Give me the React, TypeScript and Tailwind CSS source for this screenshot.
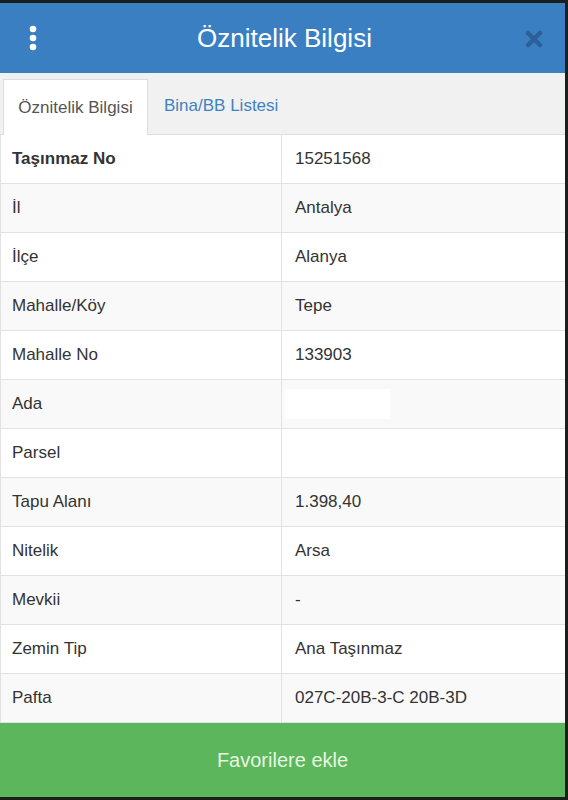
const rows: [string, string][] = [
  ['Taşınmaz No', '15251568'],
  ['İl', 'Antalya'],
  ['İlçe', 'Alanya'],
  ['Mahalle/Köy', 'Tepe'],
  ['Mahalle No', '133903'],
  ['Ada', ''],
  ['Parsel', ''],
  ['Tapu Alanı', '1.398,40'],
  ['Nitelik', 'Arsa'],
  ['Mevkii', '-'],
  ['Zemin Tip', 'Ana Taşınmaz'],
  ['Pafta', '027C-20B-3-C 20B-3D'],
];

export default function App() {
  return (
    <div
      className="w-[568px] h-[800px] bg-[#1b1f1b] pt-[3px] pr-[3px] pb-[3px] flex flex-col overflow-hidden"
      style={{ fontFamily: '"Liberation Sans", Arial, sans-serif' }}
    >
      {/* Header */}
      <div className="h-[70px] shrink-0 bg-[#3a7fc2] flex items-center justify-between px-[26px]">
        <svg width="14" height="26" viewBox="0 0 14 26">
          <circle cx="7" cy="4" r="3.3" fill="#fff" />
          <circle cx="7" cy="13" r="3.3" fill="#fff" />
          <circle cx="7" cy="22" r="3.3" fill="#fff" />
        </svg>
        <h1 className="text-white text-[26px] leading-none pl-[4px]">Öznitelik Bilgisi</h1>
        <svg width="18" height="18" viewBox="0 0 18 18" className="mr-[-4px] mt-[2px]">
          <path d="M3 3 L15 15 M15 3 L3 15" stroke="#2d6098" strokeWidth="4.5" strokeLinecap="round" />
        </svg>
      </div>

      {/* Tabs */}
      <div className="h-[62px] shrink-0 bg-[#f1f1f1] flex items-end pl-[3px] border-b border-[#dddddd]">
        <div className="h-[56px] w-[145px] bg-white border border-[#dddddd] border-b-0 flex items-center justify-center text-[17px] text-[#555] mb-[-1px]">
          Öznitelik Bilgisi
        </div>
        <div className="h-[56px] flex items-center pl-[16px] text-[17px] text-[#3f82bf]">
          Bina/BB Listesi
        </div>
      </div>

      {/* Table */}
      <div className="flex flex-col shrink-0 border-l border-[#e2e2e2]">
        {rows.map(([k, v], i) => (
          <div
            key={k}
            className={`h-[49px] flex border-b border-[#e2e2e2] text-[17px] text-[#333] ${
              i % 2 === 0 ? 'bg-white' : 'bg-[#f9f9f9]'
            }`}
          >
            <div className={`w-[281px] flex items-center pl-[11px] border-r border-[#e2e2e2] ${i === 0 ? 'font-bold' : ''}`}>
              {k}
            </div>
            <div className="flex-1 flex items-center pl-[13px]">
              {k === 'Ada' ? <div className="w-[105px] h-[30px] bg-white ml-[-10px]" /> : v}
            </div>
          </div>
        ))}
      </div>

      {/* Button */}
      <button className="flex-1 bg-[#5cb65b] text-[#e6f7e4] text-[20px] flex items-center justify-center">
        Favorilere ekle
      </button>
    </div>
  );
}
